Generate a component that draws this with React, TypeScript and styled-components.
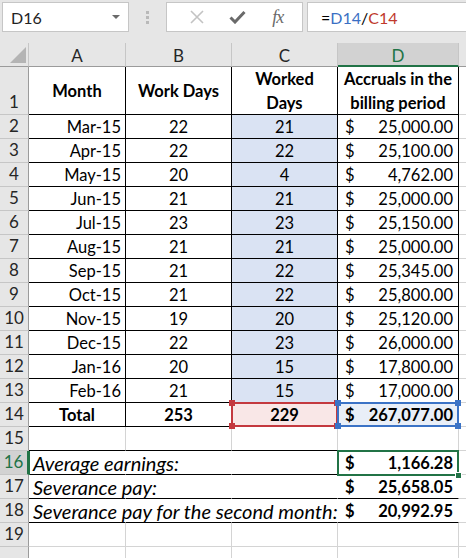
import React from 'react';
import styled, { createGlobalStyle } from 'styled-components';

type Line = 'black' | 'grid' | 'none';

const lineColor = (l: Line = 'grid') =>
  l === 'black' ? '#000000' : l === 'grid' ? '#d4d4d4' : 'transparent';

const GlobalStyle = createGlobalStyle`
  html, body {
    margin: 0;
    padding: 0;
    background: #ffffff;
    overflow: hidden;
  }
  * { box-sizing: border-box; }
`;

const Window = styled.div`
  width: 466px;
  height: 558px;
  overflow: hidden;
  background: #ffffff;
  font-family: Lato, "Open Sans", sans-serif;
  color: #000;
`;

// ---------- formula bar ----------
const FormulaBar = styled.div`
  height: 43px;
  background: #e6e6e6;
  display: flex;
  align-items: flex-start;
  padding: 2px 0 0 2px;
`;

const Box = styled.div`
  height: 30px;
  background: #ffffff;
  border: 1px solid #c6c6c6;
  display: flex;
  align-items: center;
`;

const NameBox = styled(Box)`
  width: 127px;
  justify-content: space-between;
  padding: 0 8px 0 8px;
  font-size: 16px;
  color: #222;
`;

const Caret = styled.span`
  width: 0;
  height: 0;
  border-left: 4px solid transparent;
  border-right: 4px solid transparent;
  border-top: 4px solid #6a6a6a;
`;

const Dots = styled.div`
  width: 37px;
  height: 30px;
  display: flex;
  flex-direction: column;
  align-items: center;
  justify-content: center;
  gap: 2px;
  span {
    width: 3px;
    height: 3px;
    background: #b9b9b9;
  }
`;

const Buttons = styled(Box)`
  width: 137px;
  justify-content: space-around;
  padding: 0 6px 0 10px;
`;

const FxLabel = styled.span`
  font-family: "Liberation Serif", serif;
  font-style: italic;
  font-size: 18px;
  color: #6a6a6a;
  letter-spacing: -1px;
`;

const FormulaInput = styled(Box)`
  flex: 1;
  margin-left: 4px;
  padding-left: 13px;
  font-size: 16px;
  border-right: none;
`;

const Ref = styled.span<{ $color: string }>`
  color: ${p => p.$color};
`;

// ---------- sheet ----------
const Sheet = styled.div`
  display: grid;
  grid-template-columns: 29px 97px 106px 106px 121px 1fr;
  grid-template-rows: 24px 48px;
  grid-auto-rows: 24px;
  font-size: 16.5px;
`;

const Corner = styled.div`
  background: #e6e6e6;
  border-right: 1px solid #c6c6c6;
  border-bottom: 1px solid #9b9b9b;
  display: flex;
  align-items: flex-end;
  justify-content: flex-end;
  padding: 0 2px 3px 0;
`;

const ColHead = styled.div<{ $selected?: boolean }>`
  background: ${p => (p.$selected ? '#d2d2d2' : '#e6e6e6')};
  color: ${p => (p.$selected ? '#217346' : '#262626')};
  border-right: 1px solid #c6c6c6;
  border-bottom: ${p => (p.$selected ? '2px solid #217346' : '1px solid #9b9b9b')};
  display: flex;
  align-items: center;
  justify-content: center;
  padding-top: 2px;
  font-size: 17px;
`;

const RowHead = styled.div<{ $selected?: boolean }>`
  background: ${p => (p.$selected ? '#d2d2d2' : '#e6e6e6')};
  color: ${p => (p.$selected ? '#217346' : '#262626')};
  border-bottom: 1px solid #c6c6c6;
  border-right: ${p => (p.$selected ? '2px solid #217346' : '1px solid #9b9b9b')};
  box-shadow: ${p => (p.$selected ? '1px 0 0 #217346' : 'none')};
  display: flex;
  align-items: flex-end;
  justify-content: center;
  line-height: 24px;
  font-size: 17px;
  position: relative;
  z-index: 2;
`;

const Cell = styled.div<{
  $align?: 'left' | 'center' | 'right' | 'money';
  $bold?: boolean;
  $italic?: boolean;
  $fill?: string;
  $right?: Line;
  $bottom?: Line;
}>`
  position: relative;
  display: flex;
  align-items: center;
  justify-content: ${p =>
    p.$align === 'center'
      ? 'center'
      : p.$align === 'right'
      ? 'flex-end'
      : p.$align === 'money'
      ? 'space-between'
      : 'flex-start'};
  padding: ${p => (p.$align === 'money' ? '0 5px 0 7px' : '0 4px')};
  background: ${p => p.$fill ?? 'transparent'};
  border-right: 1px solid ${p => lineColor(p.$right)};
  border-bottom: 1px solid ${p => lineColor(p.$bottom)};
  font-weight: ${p => (p.$bold ? 700 : 400)};
  font-style: ${p => (p.$italic ? 'italic' : 'normal')};
  font-size: ${p => (p.$italic ? '20px' : 'inherit')};
  white-space: nowrap;
  text-align: center;
  line-height: 24px;
  z-index: ${p => (p.$italic ? 1 : 'auto')};
`;

const Mark = styled.span<{ $color: string }>`
  position: absolute;
  top: -1px;
  left: -1px;
  right: -1px;
  bottom: -1px;
  border: 2px solid ${p => p.$color};
  pointer-events: none;
  z-index: 3;
`;

const Handle = styled.i<{ $color: string; $x: 'left' | 'right'; $y: 'top' | 'bottom' }>`
  position: absolute;
  width: 6px;
  height: 6px;
  background: ${p => p.$color};
  ${p => p.$x}: -4px;
  ${p => p.$y}: -4px;
`;

const ActiveMark = styled(Mark)`
  bottom: -2px;
  z-index: 4;
`;

const FillHandle = styled.i`
  position: absolute;
  width: 7px;
  height: 7px;
  right: -5px;
  bottom: -5px;
  background: #217346;
  border: 1px solid #ffffff;
`;

const fourHandles = (color: string) => (
  <>
    <Handle $color={color} $x="left" $y="top" />
    <Handle $color={color} $x="right" $y="top" />
    <Handle $color={color} $x="left" $y="bottom" />
    <Handle $color={color} $x="right" $y="bottom" />
  </>
);

const Money = ({ value }: { value: string }) => (
  <>
    <span>$</span>
    <span>{value}</span>
  </>
);

const data: [string, number, number, string][] = [
  ['Mar-15', 22, 21, '25,000.00'],
  ['Apr-15', 22, 22, '25,100.00'],
  ['May-15', 20, 4, '4,762.00'],
  ['Jun-15', 21, 21, '25,000.00'],
  ['Jul-15', 23, 23, '25,150.00'],
  ['Aug-15', 21, 21, '25,000.00'],
  ['Sep-15', 21, 22, '25,345.00'],
  ['Oct-15', 21, 22, '25,800.00'],
  ['Nov-15', 19, 20, '25,120.00'],
  ['Dec-15', 22, 23, '26,000.00'],
  ['Jan-16', 20, 15, '17,800.00'],
  ['Feb-16', 21, 15, '17,000.00'],
];

const summary: [number, string, string][] = [
  [16, 'Average earnings:', '1,166.28'],
  [17, 'Severance pay:', '25,658.05'],
  [18, 'Severance pay for the second month:', '20,992.95'],
];

const BLUE_FILL = '#dae3f3';

export default function App() {
  return (
    <Window>
      <GlobalStyle />
      <FormulaBar>
        <NameBox>
          <span>D16</span>
          <Caret />
        </NameBox>
        <Dots>
          <span />
          <span />
          <span />
        </Dots>
        <Buttons>
          <svg width="14" height="14" viewBox="0 0 14 14">
            <path d="M1 1 L13 13 M13 1 L1 13" stroke="#c3c3c3" strokeWidth="1.6" fill="none" />
          </svg>
          <svg width="17" height="14" viewBox="0 0 17 14">
            <path d="M1.5 7.5 L6 12 L15.5 2" stroke="#6a6a6a" strokeWidth="3" fill="none" />
          </svg>
          <FxLabel>fx</FxLabel>
        </Buttons>
        <FormulaInput>
          =<Ref $color="#3a6fc4">D14</Ref>/<Ref $color="#c0392b">C14</Ref>
        </FormulaInput>
      </FormulaBar>

      <Sheet>
        <Corner>
          <svg width="16" height="16" viewBox="0 0 16 16">
            <polygon points="16,0 16,16 0,16" fill="#b4b4b4" />
          </svg>
        </Corner>
        <ColHead>A</ColHead>
        <ColHead>B</ColHead>
        <ColHead>C</ColHead>
        <ColHead $selected>D</ColHead>
        <ColHead />

        <RowHead>1</RowHead>
        <Cell $align="center" $bold $right="black" $bottom="black">Month</Cell>
        <Cell $align="center" $bold $right="black" $bottom="black">Work Days</Cell>
        <Cell $align="center" $bold $right="black" $bottom="black">
          Worked
          <br />
          Days
        </Cell>
        <Cell $align="center" $bold $right="black" $bottom="black">
          Accruals in the
          <br />
          billing period
        </Cell>
        <Cell $right="none" />

        {data.map(([month, work, worked, amount], i) => (
          <React.Fragment key={month}>
            <RowHead>{i + 2}</RowHead>
            <Cell $align="right" $right="black" $bottom="black">{month}</Cell>
            <Cell $align="center" $right="black" $bottom="black">{work}</Cell>
            <Cell $align="center" $fill={BLUE_FILL} $right="black" $bottom="black">{worked}</Cell>
            <Cell $align="money" $right="black" $bottom="black"><Money value={amount} /></Cell>
            <Cell $right="none" />
          </React.Fragment>
        ))}

        <RowHead>14</RowHead>
        <Cell $align="center" $bold $right="black" $bottom="black">Total</Cell>
        <Cell $align="center" $bold $right="black" $bottom="black">253</Cell>
        <Cell $align="center" $bold $fill="#f9e7e7" $right="black" $bottom="black">
          229
          <Mark $color="#c4393f">{fourHandles('#c4393f')}</Mark>
        </Cell>
        <Cell $align="money" $bold $fill="#e9eff8" $right="black" $bottom="black">
          <Money value="267,077.00" />
          <Mark $color="#3b73c6">{fourHandles('#3b73c6')}</Mark>
        </Cell>
        <Cell $right="none" />

        <RowHead>15</RowHead>
        <Cell $bottom="black" />
        <Cell $bottom="black" />
        <Cell $bottom="black" />
        <Cell $bottom="black" />
        <Cell $right="none" />

        {summary.map(([n, label, amount]) => (
          <React.Fragment key={n}>
            <RowHead $selected={n === 16}>{n}</RowHead>
            <Cell $italic $right="none" $bottom="black">{label}</Cell>
            <Cell $right="none" $bottom="black" />
            <Cell $right="none" $bottom="black" />
            <Cell $align="money" $bold $right="none" $bottom="black">
              <Money value={amount} />
              {n === 16 && (
                <ActiveMark $color="#217346">
                  <FillHandle />
                </ActiveMark>
              )}
            </Cell>
            <Cell $right="none" />
          </React.Fragment>
        ))}

        {['19', ''].map(n => (
          <React.Fragment key={n || 'next'}>
            <RowHead>{n}</RowHead>
            <Cell />
            <Cell />
            <Cell />
            <Cell />
            <Cell $right="none" />
          </React.Fragment>
        ))}
      </Sheet>
    </Window>
  );
}
